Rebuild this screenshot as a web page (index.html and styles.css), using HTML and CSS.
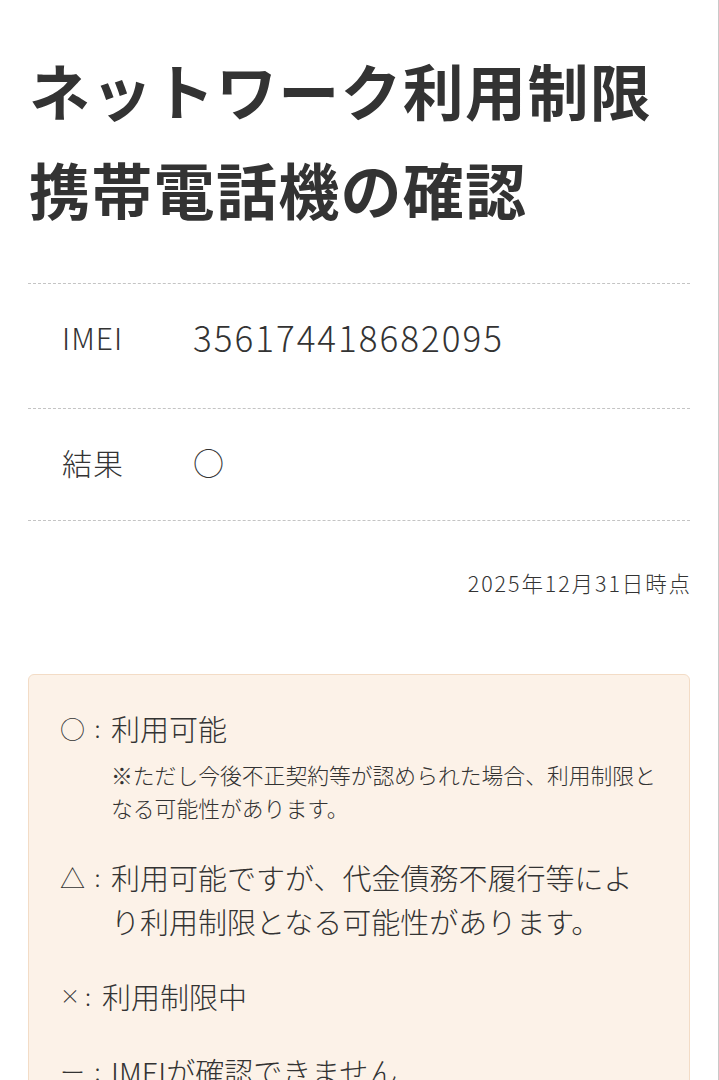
FILE: index.html
```html
<!DOCTYPE html>
<html lang="ja">
<head>
    <meta charset="UTF-8">
    <meta name="viewport" content="width=device-width, initial-scale=1.0">
    <title>ネットワーク利用制限携帯電話機の確認</title>
    <link rel="stylesheet" href="styles.css">
</head>
<body>
    <div class="page">
        <!-- タイトル -->
        <h1 class="title">ネットワーク利用制限<br>携帯電話機の確認</h1>

        <!-- 確認結果 -->
        <div class="result">
            <div class="row row-imei">
                <div class="label">IMEI</div>
                <div class="value num">356174418682095</div>
            </div>
            <div class="row">
                <div class="label">結果</div>
                <div class="value">○</div>
            </div>
        </div>
        <p class="date">2025年12月31日時点</p>

        <!-- 凡例 -->
        <div class="legend">
            <div class="item">
                <span class="mark"><span class="sym">○</span><span class="colon">:</span></span>
                <div class="text">
                    利用可能
                    <p class="note">※ただし今後不正契約等が認められた場合、利用制限となる可能性があります。</p>
                </div>
            </div>
            <div class="item">
                <span class="mark"><span class="sym">△</span><span class="colon">:</span></span>
                <div class="text">利用可能ですが、代金債務不履行等により利用制限となる可能性があります。</div>
            </div>
            <div class="item">
                <span class="mark mark-x"><span class="sym">×</span><span class="colon">:</span></span>
                <div class="text">利用制限中</div>
            </div>
            <div class="item">
                <span class="mark"><span class="sym">ー</span><span class="colon">:</span></span>
                <div class="text">IMEIが確認できません</div>
            </div>
        </div>
    </div>
</body>
</html>
```

FILE: styles.css
```css
*{
    margin: 0;
    padding: 0;
    box-sizing: border-box;
}
body{
    background-color: #fff;
    color: #333;
    font-family: "Noto Sans CJK JP", "Noto Sans", sans-serif;
}
.page{
    width: 719px;
    min-height: 100vh;
    padding: 40px 28px 0 28px;
    border-right: 1px solid #c9c9c9;
}
.title{
    font-size: 61px;
    line-height: 99px;
    font-weight: 700;
    letter-spacing: 1.3px;
    color: #333;
    margin-left: 1px;
}
.result{
    margin-top: 45px;
    border-top: 1px dashed #c4c4c4;
}
.row{
    display: flex;
    align-items: center;
    padding: 31px 0 36px 34px;
    font-size: 30px;
    line-height: 44px;
    font-weight: 300;
    border-bottom: 1px dashed #c4c4c4;
}
.row-imei{
    padding-bottom: 49px;
}
.label{
    width: 131px;
    letter-spacing: 1px;
}
.value{
    font-size: 31px;
}
.num{
    font-size: 35px;
    letter-spacing: 2px;
}
.date{
    margin-top: 47px;
    text-align: right;
    font-size: 21.5px;
    line-height: 30px;
    font-weight: 300;
    letter-spacing: 1.9px;
    margin-right: -2px;
}
.legend{
    margin-top: 76px;
    background-color: #fcf2e8;
    border: 1px solid #f3dcc6;
    border-radius: 6px;
    padding: 31px 30px 20px 31px;
}
.item{
    display: flex;
    font-size: 29px;
    line-height: 44px;
    font-weight: 300;
    margin-bottom: 31px;
}
.mark{
    flex: none;
    display: flex;
    width: 51px;
}
.sym{
    width: 24px;
    font-size: 25px;
    text-align: center;
}
.colon{
    flex: 1;
    text-align: center;
    font-size: 24px;
}
.mark-x{
    width: 42px;
}
.mark-x .sym{
    width: 14px;
    font-size: 20px;
}
.text{
    flex: 1;
}
.note{
    margin-top: 8px;
    font-size: 21.8px;
    line-height: 33px;
}
```
